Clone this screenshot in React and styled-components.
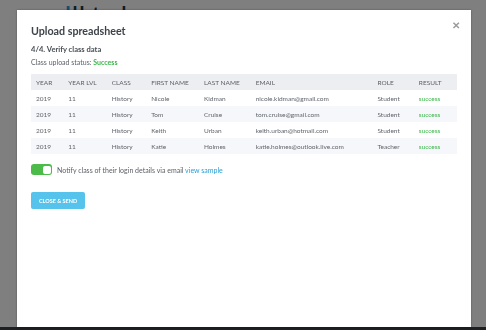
import React from "react";
import styled, { createGlobalStyle } from "styled-components";

const GlobalStyle = createGlobalStyle`
  html, body {
    margin: 0;
    padding: 0;
    background: #ffffff;
    font-family: Lato, "Open Sans", "Liberation Sans", sans-serif;
  }
`;

const Page = styled.div`
  height: 330px;
  display: flex;
  flex-direction: column;
  justify-content: space-between;
  overflow: hidden;
`;

const TopBar = styled.div`
  height: 10px;
  padding-left: 40px;
  display: flex;
  align-items: flex-end;
  overflow: hidden;
`;

const Logo = styled.span`
  font-size: 20px;
  font-weight: 700;
  line-height: 1;
  margin-bottom: -14px;
  color: #1b3a4e;
  letter-spacing: 2px;
  & b {
    color: #2a9fd6;
  }
`;

const BottomBar = styled.div`
  height: 3px;
  background: #3c3f42;
`;

const Overlay = styled.div`
  position: fixed;
  inset: 0;
  background: rgba(0, 0, 0, 0.5);
  display: flex;
  padding: 10px 15px 3px 17px;
`;

const Modal = styled.div`
  position: relative;
  flex: 1;
  background: #ffffff;
  box-shadow: 0 0 2px rgba(0, 0, 0, 0.35);
  padding: 14px 14px 0 14px;
  color: #444a50;
`;

const Close = styled.span`
  position: absolute;
  top: 10px;
  right: 11px;
  font-size: 10px;
  line-height: 1;
  color: #9a9a9a;
  font-weight: 700;
`;

const Title = styled.h2`
  margin: 0;
  font-size: 10.7px;
  font-weight: 700;
  color: #3d434a;
  line-height: 14px;
`;

const Step = styled.h3`
  margin: 5px 0 0 0;
  font-size: 7.6px;
  font-weight: 700;
  color: #4a4f55;
  line-height: 12px;
`;

const Status = styled.p`
  margin: 1px 0 0 0;
  font-size: 7px;
  line-height: 12px;
  color: #5a5f66;
  & strong {
    color: #3cb54a;
  }
`;

const Table = styled.table`
  margin-top: 6px;
  width: 426px;
  border-collapse: collapse;
  font-size: 6.5px;
  color: #60656b;
`;

const Th = styled.th`
  text-align: left;
  font-weight: 400;
  text-transform: uppercase;
  height: 16px;
  padding: 0 0 0 5px;
  background: #eceef1;
  color: #5c6167;
  width: ${(p) => p.w}px;
`;

const Tr = styled.tr`
  background: ${(p) => (p.shaded ? "#f5f7fa" : "#ffffff")};
`;

const Td = styled.td`
  height: 16px;
  padding: 0 0 0 5px;
  color: ${(p) => (p.ok ? "#3cb54a" : "#60656b")};
`;

const NotifyRow = styled.div`
  margin-top: 10px;
  display: flex;
  align-items: center;
  gap: 5px;
  font-size: 7px;
  color: #5a5f66;
  & a {
    color: #2a9fd6;
    text-decoration: none;
  }
`;

const Toggle = styled.span`
  width: 21px;
  height: 11px;
  box-sizing: border-box;
  border-radius: 3px;
  background: #4cbb4a;
  display: flex;
  justify-content: flex-end;
  align-items: center;
  padding: 1.5px;
`;

const Knob = styled.span`
  width: 8px;
  height: 8px;
  border-radius: 2px;
  background: #ffffff;
`;

const Button = styled.button`
  display: block;
  margin-top: 17px;
  width: 54px;
  height: 17px;
  border: none;
  border-radius: 2px;
  background: #55c3ec;
  color: #ffffff;
  font-family: inherit;
  font-size: 5.5px;
  font-weight: 700;
  text-transform: uppercase;
  padding: 0;
`;

const columns = [
  ["Year", 30],
  ["Year lvl", 44],
  ["Class", 38],
  ["First name", 55],
  ["Last name", 53],
  ["Email", 124],
  ["Role", 40],
  ["Result", 42],
];

const rows = [
  ["Nicole", "Kidman", "nicole.kidman@gmail.com", "Student"],
  ["Tom", "Cruise", "tom.cruise@gmail.com", "Student"],
  ["Keith", "Urban", "keith.urban@hotmail.com", "Student"],
  ["Katie", "Holmes", "katie.holmes@outlook.live.com", "Teacher"],
];

export default function App() {
  return (
    <>
      <GlobalStyle />
      <Page>
        <TopBar>
          <Logo>
            <b>c</b> &nbsp;<b>l</b>lktnd
          </Logo>
        </TopBar>
        <BottomBar />
      </Page>
      <Overlay>
        <Modal>
          <Close>✕</Close>
          <Title>Upload spreadsheet</Title>
          <Step>4/4. Verify class data</Step>
          <Status>
            Class upload status: <strong>Success</strong>
          </Status>
          <Table>
            <thead>
              <tr>
                {columns.map(([label, w]) => (
                  <Th key={label} w={w}>
                    {label}
                  </Th>
                ))}
              </tr>
            </thead>
            <tbody>
              {rows.map(([first, last, email, role], i) => (
                <Tr key={email} shaded={i % 2 === 1}>
                  <Td>2019</Td>
                  <Td>11</Td>
                  <Td>History</Td>
                  <Td>{first}</Td>
                  <Td>{last}</Td>
                  <Td>{email}</Td>
                  <Td>{role}</Td>
                  <Td ok>success</Td>
                </Tr>
              ))}
            </tbody>
          </Table>
          <NotifyRow>
            <Toggle>
              <Knob />
            </Toggle>
            <span>
              Notify class of their login details via email{" "}
              <a href="#">view sample</a>
            </span>
          </NotifyRow>
          <Button>Close &amp; Send</Button>
        </Modal>
      </Overlay>
    </>
  );
}
